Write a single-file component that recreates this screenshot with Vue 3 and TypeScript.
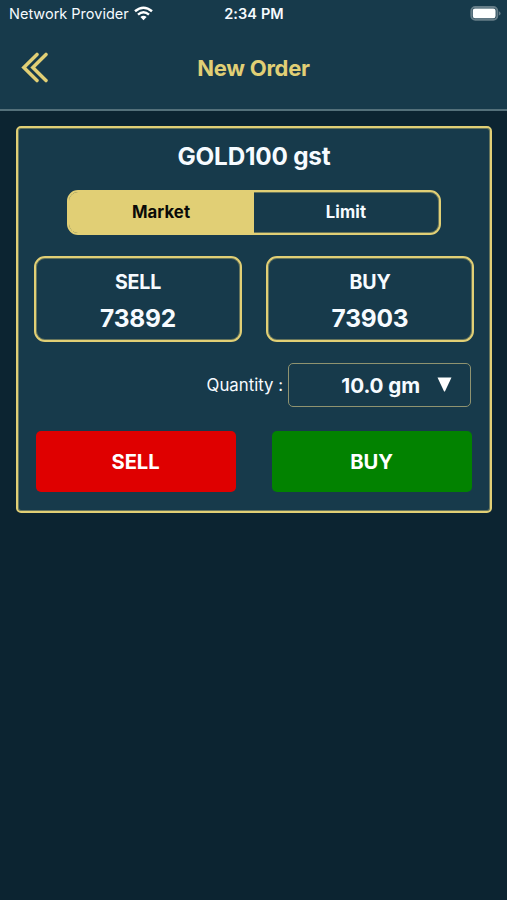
<script setup lang="ts">
import { ref } from 'vue'

type OrderType = 'Market' | 'Limit'
interface Quote {
  side: 'SELL' | 'BUY'
  price: number
}

const orderTypes: OrderType[] = ['Market', 'Limit']
const selected = ref<OrderType>('Market')
const quotes: Quote[] = [
  { side: 'SELL', price: 73892 },
  { side: 'BUY', price: 73903 },
]
const quantity = ref('10.0 gm')
</script>

<template>
  <div class="screen">
    <header class="header">
      <div class="status">
        <div class="carrier">
          <span class="carrier-name">Network Provider</span>
          <svg class="wifi" width="19" height="15" viewBox="0 0 19 15">
            <path d="M1 5.3Q9.5 -1.9 18 5.3" />
            <path d="M4 8.6Q9.5 4 15 8.6" />
            <path class="dot" d="M6.4 11Q9.5 8.4 12.6 11L9.5 14.2Z" />
          </svg>
        </div>
        <span class="clock">2:34 PM</span>
        <svg class="battery" width="31" height="15" viewBox="0 0 31 15">
          <rect class="shell" x="1.3" y="1" width="26" height="12.8" rx="4" />
          <rect class="charge" x="2.8" y="2.6" width="22.8" height="9.6" rx="2.2" />
          <path class="tip" d="M28.9 5.2Q30.6 5.9 30.6 7.4Q30.6 8.9 28.9 9.6Z" />
        </svg>
      </div>
      <div class="nav">
        <button class="back" aria-label="Back">
          <svg width="28" height="31" viewBox="0 0 28 31">
            <path d="M16 2.4L2.8 15.5L16 28.6M25 2.4L11.8 15.5L25 28.6" />
          </svg>
        </button>
        <h1 class="title">New Order</h1>
      </div>
    </header>

    <main class="card">
      <h2 class="symbol">GOLD100 gst</h2>
      <div class="segments">
        <button
          v-for="type in orderTypes"
          :key="type"
          class="segment"
          :class="{ active: selected === type }"
          @click="selected = type"
        >{{ type }}</button>
      </div>
      <div class="quotes">
        <div v-for="quote in quotes" :key="quote.side" class="quote">
          <span class="side">{{ quote.side }}</span>
          <span class="price">{{ quote.price }}</span>
        </div>
      </div>
      <div class="quantity">
        <span class="quantity-label">Quantity :</span>
        <button class="select">
          <span class="amount">{{ quantity }}</span>
          <svg class="arrow" width="15" height="15" viewBox="0 0 15 15">
            <path d="M0.5 0.5H14.5L7.9 14.5H7.1Z" />
          </svg>
        </button>
      </div>
      <div class="actions">
        <button class="action sell">SELL</button>
        <button class="action buy">BUY</button>
      </div>
    </main>
  </div>
</template>

<style>
body {
  background: #0c2431;
}
</style>

<style scoped>
* {
  box-sizing: border-box;
}
.screen {
  display: flow-root;
  min-height: 900px;
  background: #0c2431;
  color: #f6fbff;
  font-family: Inter, "Liberation Sans", sans-serif;
}
button {
  margin: 0;
  padding: 0;
  border: 0;
  background: none;
  color: inherit;
  font: inherit;
}
svg {
  display: block;
}
.header {
  height: 111px;
  background: #173a4b;
  border-bottom: 2px solid #54707a;
}
.status {
  display: grid;
  grid-template-columns: 1fr auto 1fr;
  align-items: center;
  height: 27px;
  padding: 0 6px 0 9px;
}
.carrier {
  display: flex;
  align-items: center;
  gap: 5px;
  font-size: 14.5px;
}
.carrier-name {
  white-space: nowrap;
}
.wifi path {
  fill: none;
  stroke: #fff;
  stroke-width: 2.5;
}
.wifi .dot {
  fill: #fff;
  stroke: none;
}
.clock {
  margin-right: 2px;
  font-size: 14.5px;
  font-weight: 600;
  letter-spacing: 0.1px;
}
.battery {
  justify-self: end;
}
.shell {
  fill: none;
  stroke: #667d88;
  stroke-width: 1.9;
}
.charge {
  fill: #fff;
}
.tip {
  fill: #667d88;
}
.nav {
  display: grid;
  grid-template-columns: 1fr auto 1fr;
  align-items: center;
  height: 82px;
  padding: 0 21px;
}
.back {
  padding-bottom: 2px;
}
.back path {
  fill: none;
  stroke: #e1cf75;
  stroke-width: 3.5;
  stroke-linecap: round;
}
.title {
  margin: 0;
  color: #e1cf75;
  font-size: 22px;
  font-weight: 700;
  letter-spacing: -0.25px;
}
.card {
  width: 476px;
  height: 387px;
  margin: 15px 0 0 16px;
  padding: 0 16px;
  border: 2px solid #e1cf75;
  border-radius: 5px;
  background: #173a4b;
  box-shadow: inset 0 0 0 1px rgba(225, 207, 117, 0.4);
}
.symbol {
  margin: 0;
  padding-top: 13px;
  height: 62px;
  line-height: 31px;
  text-align: center;
  font-size: 24.3px;
  font-weight: 700;
  letter-spacing: -0.2px;
}
.segments {
  display: grid;
  grid-template-columns: 1fr 1fr;
  width: 374px;
  height: 45px;
  margin: 0 auto;
  overflow: hidden;
  border: 2px solid #e1cf75;
  border-radius: 11px;
  box-shadow: inset 0 0 0 1px rgba(225, 207, 117, 0.4);
}
.segment {
  padding: 0 1px 2px 0;
  font-size: 16.7px;
  font-weight: 700;
  letter-spacing: 0.1px;
}
.segment.active {
  background: #e1cf75;
  color: #0b0b08;
}
.quotes {
  display: flex;
  gap: 24px;
  margin-top: 21px;
}
.quote {
  display: flex;
  flex: 1;
  flex-direction: column;
  align-items: center;
  height: 86px;
  padding-top: 10px;
  border: 2px solid #e1cf75;
  border-radius: 11px;
  box-shadow: inset 0 0 0 1px rgba(225, 207, 117, 0.4);
}
.side {
  line-height: 28px;
  font-size: 19.6px;
  font-weight: 700;
  letter-spacing: -0.2px;
}
.price {
  margin-top: 5px;
  line-height: 34px;
  font-size: 24.5px;
  font-weight: 700;
  letter-spacing: -0.2px;
}
.quantity {
  display: flex;
  align-items: center;
  justify-content: flex-end;
  gap: 5px;
  margin: 21px 3px 0 0;
}
.quantity-label {
  font-size: 16.8px;
}
.select {
  display: flex;
  align-items: center;
  justify-content: flex-end;
  width: 183px;
  height: 44px;
  padding-right: 18px;
  border: 1px solid #8f9370;
  border-radius: 5px;
}
.amount {
  font-size: 20.7px;
  font-weight: 700;
  letter-spacing: -0.1px;
}
.arrow {
  margin: 0 0 1px 17px;
  fill: #fff;
}
.actions {
  display: flex;
  gap: 36px;
  margin: 24px 2px 0;
}
.action {
  flex: 1;
  height: 61px;
  padding-right: 1px;
  border-radius: 5px;
  color: #fff;
  font-size: 20.2px;
  font-weight: 700;
  letter-spacing: -0.1px;
}
.sell {
  background: #df0000;
}
.buy {
  background: #028200;
}
</style>
